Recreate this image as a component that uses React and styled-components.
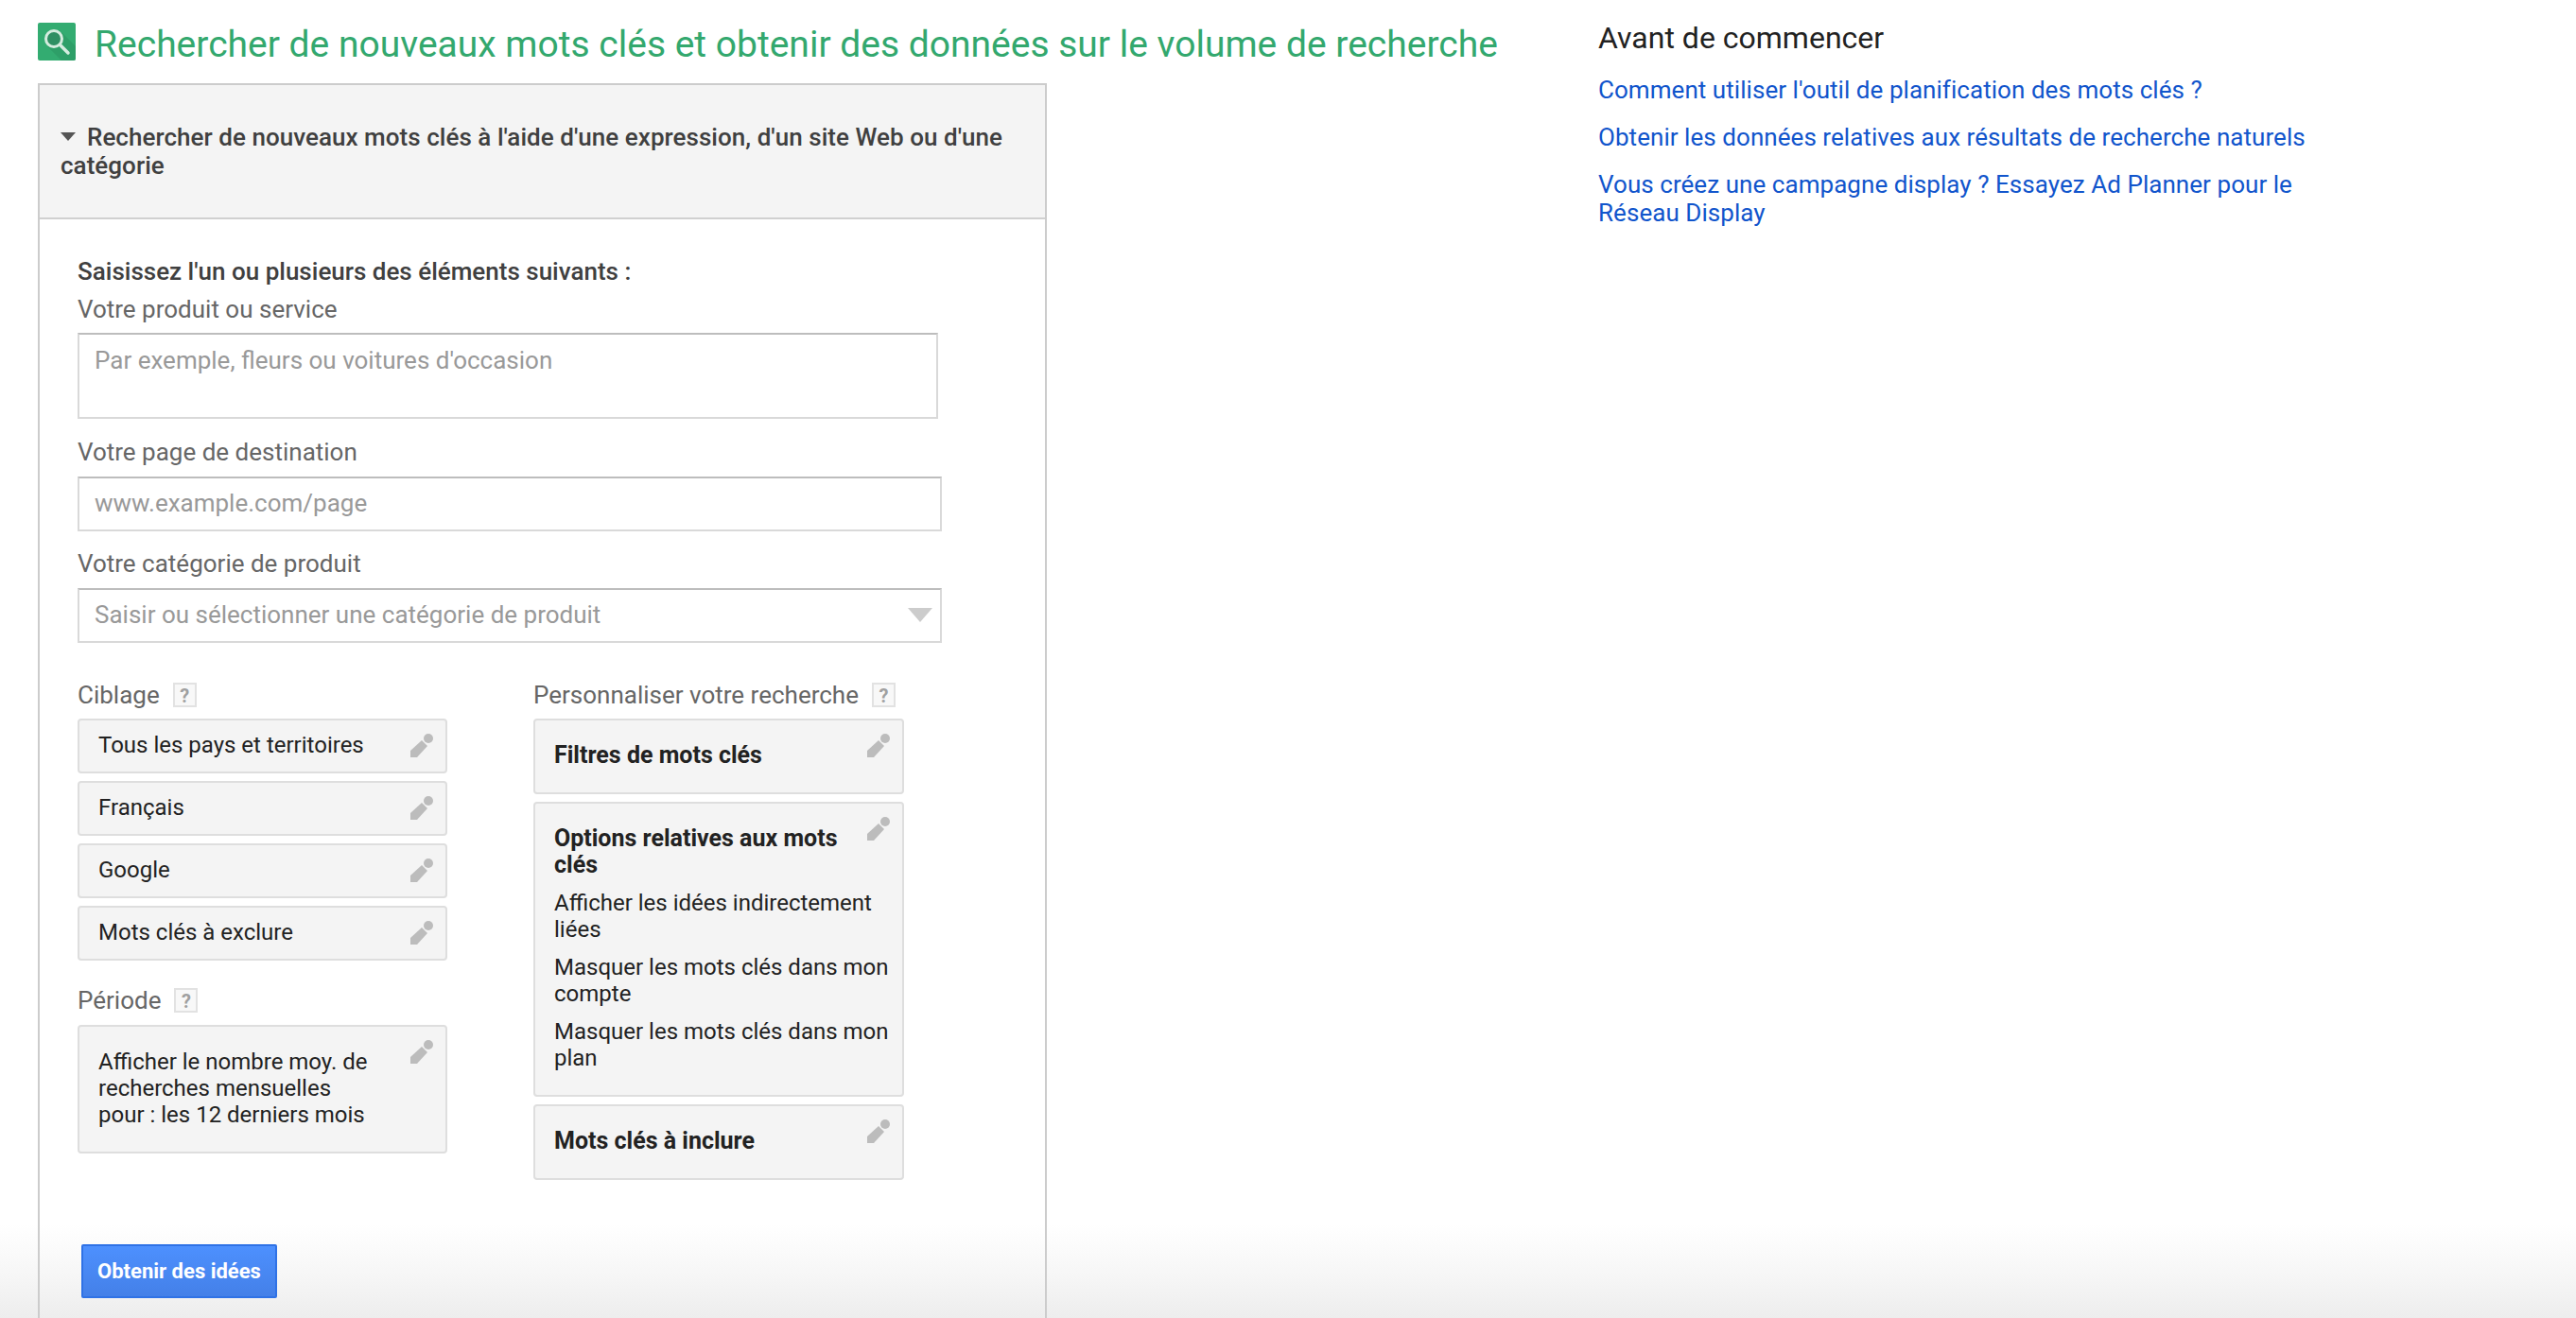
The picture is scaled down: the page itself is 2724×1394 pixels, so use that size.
import React from "react";
import styled, { createGlobalStyle } from "styled-components";

const Global = createGlobalStyle`
  html, body { margin: 0; padding: 0; background: #fff; }
  body { font-family: Roboto, "Liberation Sans", Arial, sans-serif; color: #222; }
`;

const Page = styled.div`
  height: 1394px;
  overflow: hidden;
  display: grid;
  grid-template-columns: 1650px 780px;
  padding-left: 40px;
  background: linear-gradient(#fff 1295px, #f6f6f6 1350px, #ededed 1394px);
`;

const TitleRow = styled.div`
  display: flex;
  align-items: flex-start;
  gap: 20px;
  padding-top: 24px;
  height: 64px;
`;

const Title = styled.h1`
  margin: 1px 0 0;
  font-size: 39px;
  line-height: 44px;
  font-weight: 400;
  color: #33a86e;
  white-space: nowrap;
`;

const Panel = styled.section`
  width: 1067px;
  box-sizing: border-box;
  border: 2px solid #ccc;
  border-bottom: none;
  height: 1400px;
`;

const PanelHead = styled.div`
  background: #f4f4f4;
  border-bottom: 2px solid #d0d0d0;
  box-sizing: border-box;
  height: 142px;
  padding: 40px 20px 0 22px;
  font-size: 26px;
  line-height: 30px;
  font-weight: 500;
  letter-spacing: 0.04px;
  color: #404040;
`;

const Caret = styled.span`
  display: inline-block;
  width: 0;
  height: 0;
  border-left: 8px solid transparent;
  border-right: 8px solid transparent;
  border-top: 9px solid #555;
  margin: 0 12px 5px 0;
`;

const PanelBody = styled.div`
  padding: 40px 0 0 40px;
`;

const Lead = styled.div`
  font-size: 26px;
  line-height: 30px;
  font-weight: 500;
  color: #404040;
  margin-bottom: 10px;
`;

const Label = styled.div`
  font-size: 26px;
  line-height: 30px;
  color: #666;
  margin-top: ${p => p.$top || 0}px;
  margin-bottom: ${p => p.$bottom || 10}px;
  display: flex;
  align-items: center;
  gap: 14px;
`;

const Help = styled.span`
  box-sizing: border-box;
  width: 25px;
  height: 26px;
  border: 2px solid #e2e2e2;
  background: #f8f8f8;
  color: #a0a0a0;
  font-size: 20px;
  font-weight: 700;
  line-height: 24px;
  text-align: center;
`;

const fieldCss = `
  display: block;
  box-sizing: border-box;
  border: 2px solid #d9d9d9;
  border-top-color: #bdbdbd;
  background: #fff;
  font-family: Roboto, "Liberation Sans", Arial, sans-serif;
  font-size: 26px;
  line-height: 30px;
  color: #222;
  outline: none;
  padding: 0 16px;
  &::placeholder { color: #999; opacity: 1; }
`;

const Area = styled.textarea`
  ${fieldCss}
  width: 910px;
  height: 91px;
  padding-top: 12px;
  resize: none;
`;

const Field = styled.input`
  ${fieldCss}
  width: 914px;
  height: 58px;
  padding-bottom: 3px;
`;

const SelectWrap = styled.div`
  position: relative;
  width: 914px;
`;

const SelectArrow = styled.span`
  position: absolute;
  right: 10px;
  top: 21px;
  width: 0;
  height: 0;
  border-left: 13px solid transparent;
  border-right: 13px solid transparent;
  border-top: 15px solid #ccc;
`;

const Columns = styled.div`
  display: grid;
  grid-template-columns: 391px 392px;
  column-gap: 91px;
  margin-top: 40px;
`;

const Stack = styled.div`
  display: flex;
  flex-direction: column;
  gap: 8px;
`;

const Box = styled.div`
  position: relative;
  box-sizing: border-box;
  background: #f4f4f4;
  border: 2px solid #dedede;
  border-radius: 4px;
  padding: ${p => p.$tall ? "23px 12px 25px 20px" : "12px 12px 14px 20px"};
  font-size: 24px;
  line-height: 28px;
  color: #222;
`;

const BoxTitle = styled.div`
  font-weight: 700;
  font-size: 25px;
  line-height: 28px;
  color: #222;
  padding-right: 36px;
`;

const BoxLine = styled.div`
  margin-top: 12px;
`;

const Pencil = styled.svg`
  position: absolute;
  top: 14px;
  right: 12px;
  width: 26px;
  height: 26px;
`;

const Submit = styled.button`
  display: block;
  box-sizing: border-box;
  margin: 68px 0 0 4px;
  width: 207px;
  height: 57px;
  border: 2px solid #2f72e6;
  border-radius: 2px;
  background: linear-gradient(#4d90fe, #4480e8);
  color: #fff;
  font-family: Roboto, "Liberation Sans", Arial, sans-serif;
  font-size: 22px;
  font-weight: 700;
  padding: 0;
`;

const Side = styled.aside`
  padding-top: 22px;
`;

const SideTitle = styled.h2`
  margin: 0 0 22px;
  font-size: 32px;
  line-height: 36px;
  font-weight: 400;
  color: #222;
`;

const SideLink = styled.a`
  display: block;
  font-size: 26px;
  line-height: 30px;
  letter-spacing: 0.05px;
  color: #1155cc;
  text-decoration: none;
  margin-bottom: 20px;
  max-width: 760px;
`;

const Edit = () => (
  <Pencil viewBox="0 0 26 26">
    <path d="M1 25 V18 L13 7 L19 13 L8 25 Z" fill="#bcbcbc" />
    <circle cx="20" cy="5" r="5" fill="#bcbcbc" />
  </Pencil>
);

export default function App() {
  return (
    <Page>
      <Global />
      <div>
        <TitleRow>
          <svg width="40" height="40" viewBox="0 0 40 40">
            <rect width="40" height="40" rx="2" fill="#33ac71" />
            <path d="M10 25 L25 10 L40 25 V38 a2 2 0 0 1 -2 2 H25 Z" fill="#2c9a65" opacity="0.7" />
            <circle cx="17" cy="17" r="8.5" fill="#2f8f63" stroke="#d5ecdf" strokeWidth="3" />
            <path d="M24 24 L32 32" stroke="#d5ecdf" strokeWidth="3.5" strokeLinecap="round" />
          </svg>
          <Title>Rechercher de nouveaux mots clés et obtenir des données sur le volume de recherche</Title>
        </TitleRow>
        <Panel>
          <PanelHead>
            <Caret />
            Rechercher de nouveaux mots clés à l'aide d'une expression, d'un site Web ou d'une catégorie
          </PanelHead>
          <PanelBody>
            <Lead>Saisissez l'un ou plusieurs des éléments suivants :</Lead>
            <Label>Votre produit ou service</Label>
            <Area placeholder="Par exemple, fleurs ou voitures d'occasion" />
            <Label $top={20} $bottom={11}>Votre page de destination</Label>
            <Field placeholder="www.example.com/page" />
            <Label $top={19} $bottom={11}>Votre catégorie de produit</Label>
            <SelectWrap>
              <Field placeholder="Saisir ou sélectionner une catégorie de produit" />
              <SelectArrow />
            </SelectWrap>
            <Columns>
              <div>
                <Label>Ciblage <Help>?</Help></Label>
                <Stack>
                  <Box>Tous les pays et territoires<Edit /></Box>
                  <Box>Français<Edit /></Box>
                  <Box>Google<Edit /></Box>
                  <Box>Mots clés à exclure<Edit /></Box>
                </Stack>
                <Label $top={27} $bottom={11}>Période <Help>?</Help></Label>
                <Box $tall>
                  Afficher le nombre moy. de<br />recherches mensuelles<br />pour : les 12 derniers mois
                  <Edit />
                </Box>
              </div>
              <div>
                <Label>Personnaliser votre recherche <Help>?</Help></Label>
                <Stack>
                  <Box $tall>
                    <BoxTitle>Filtres de mots clés</BoxTitle>
                    <Edit />
                  </Box>
                  <Box $tall>
                    <BoxTitle>Options relatives aux mots clés</BoxTitle>
                    <BoxLine>Afficher les idées indirectement liées</BoxLine>
                    <BoxLine>Masquer les mots clés dans mon compte</BoxLine>
                    <BoxLine>Masquer les mots clés dans mon plan</BoxLine>
                    <Edit />
                  </Box>
                  <Box $tall>
                    <BoxTitle>Mots clés à inclure</BoxTitle>
                    <Edit />
                  </Box>
                </Stack>
              </div>
            </Columns>
            <Submit>Obtenir des idées</Submit>
          </PanelBody>
        </Panel>
      </div>
      <Side>
        <SideTitle>Avant de commencer</SideTitle>
        <SideLink href="#">Comment utiliser l'outil de planification des mots clés ?</SideLink>
        <SideLink href="#">Obtenir les données relatives aux résultats de recherche naturels</SideLink>
        <SideLink href="#">Vous créez une campagne display ? Essayez Ad Planner pour le Réseau Display</SideLink>
      </Side>
    </Page>
  );
}
